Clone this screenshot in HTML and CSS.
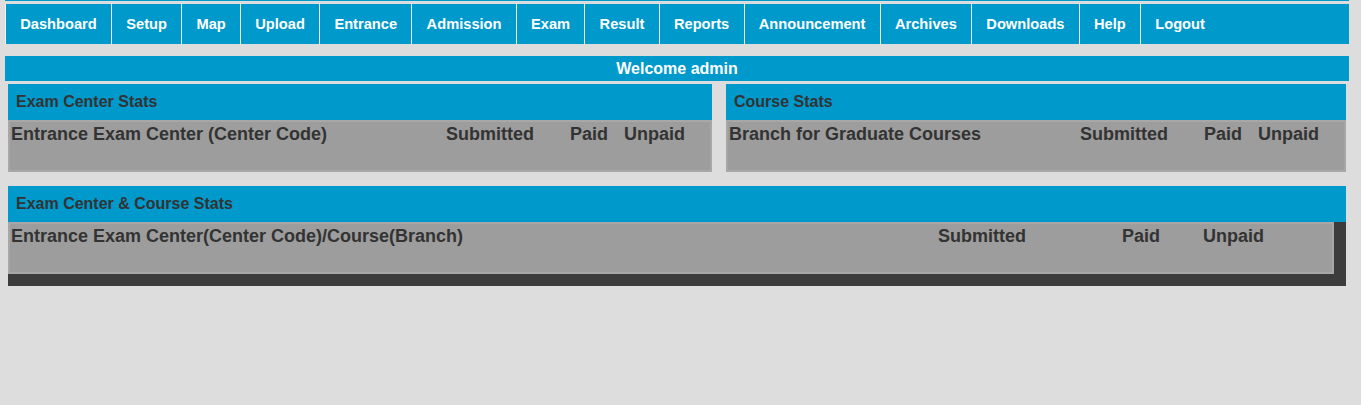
FILE: index.html
```html
<!DOCTYPE html>
<html>
<head>
<meta charset="utf-8">
<title>Admin Dashboard</title>
<link rel="stylesheet" href="styles.css">
</head>
<body>
<div class="wrap">
  <div class="topline"></div>
  <ul class="nav">
    <li>Dashboard</li>
    <li>Setup</li>
    <li>Map</li>
    <li>Upload</li>
    <li>Entrance</li>
    <li>Admission</li>
    <li>Exam</li>
    <li>Result</li>
    <li>Reports</li>
    <li>Announcement</li>
    <li>Archives</li>
    <li>Downloads</li>
    <li>Help</li>
    <li>Logout</li>
  </ul>
  <div class="welcome">Welcome admin</div>
  <div class="content">
    <div class="row">
      <div class="panel panel-left">
        <div class="panel-head">Exam Center Stats</div>
        <div class="panel-body grid-top">
          <div class="cell">Entrance Exam Center (Center Code)</div>
          <div class="cell">Submitted</div>
          <div class="cell">Paid</div>
          <div class="cell">Unpaid</div>
        </div>
      </div>
      <div class="panel panel-right">
        <div class="panel-head">Course Stats</div>
        <div class="panel-body grid-top">
          <div class="cell">Branch for Graduate Courses</div>
          <div class="cell">Submitted</div>
          <div class="cell">Paid</div>
          <div class="cell">Unpaid</div>
        </div>
      </div>
    </div>
    <div class="panel panel-wide">
      <div class="panel-head">Exam Center &amp; Course Stats</div>
      <div class="scroll-area">
        <div class="scroll-main">
          <div class="panel-body grid-wide">
            <div class="cell">Entrance Exam Center(Center Code)/Course(Branch)</div>
            <div class="cell">Submitted</div>
            <div class="cell">Paid</div>
            <div class="cell">Unpaid</div>
          </div>
          <div class="hbar"></div>
        </div>
        <div class="vbar"></div>
      </div>
    </div>
  </div>
</div>
</body>
</html>
```
FILE: styles.css
```css
html, body {
  margin: 0;
  padding: 0;
  background: #dddddd;
}
body {
  font-family: "Liberation Sans", Arial, sans-serif;
}
.wrap {
  margin-left: 5px;
  width: 1344px;
}
.topline {
  height: 1px;
  background: #0099cc;
}
.nav {
  list-style: none;
  margin: 3px 0 0 0;
  padding: 0;
  height: 40px;
  background: #0099cc;
  display: flex;
}
.nav li {
  border-left: 1px solid #eef6fa;
  padding: 0 14.3px 0 14.2px;
  line-height: 40px;
  height: 40px;
  color: #ffffff;
  font-weight: bold;
  font-size: 14.67px;
}
.welcome {
  margin-top: 12px;
  height: 25px;
  line-height: 25px;
  background: #0099cc;
  color: #ffffff;
  font-weight: bold;
  font-size: 16px;
  text-align: center;
}
.content {
  padding: 3px 3px 0 3px;
}
.row {
  display: flex;
  gap: 14px;
}
.panel-left {
  width: 704px;
}
.panel-right {
  width: 620px;
}
.panel-wide {
  margin-top: 14px;
}
.panel-head {
  height: 36px;
  line-height: 36px;
  background: #0099cc;
  color: #333333;
  font-weight: bold;
  font-size: 16px;
  padding-left: 8px;
}
.panel-body {
  height: 48px;
  border: 2px solid #a7a7a7;
  background: #9d9d9d;
  display: grid;
  align-content: start;
  color: #333333;
  font-weight: bold;
  font-size: 18px;
  line-height: 24px;
}
.grid-top {
  grid-template-columns: 1fr 124px 54px 87px;
}
.grid-wide {
  grid-template-columns: 1fr 184px 81px 130px;
}
.cell {
  padding-left: 1px;
  white-space: nowrap;
}
.scroll-area {
  display: flex;
  background: #3c3c3c;
}
.scroll-main {
  flex: 1;
}
.hbar {
  height: 12px;
  background: #3c3c3c;
}
.vbar {
  width: 12px;
  background: #3c3c3c;
}
```
